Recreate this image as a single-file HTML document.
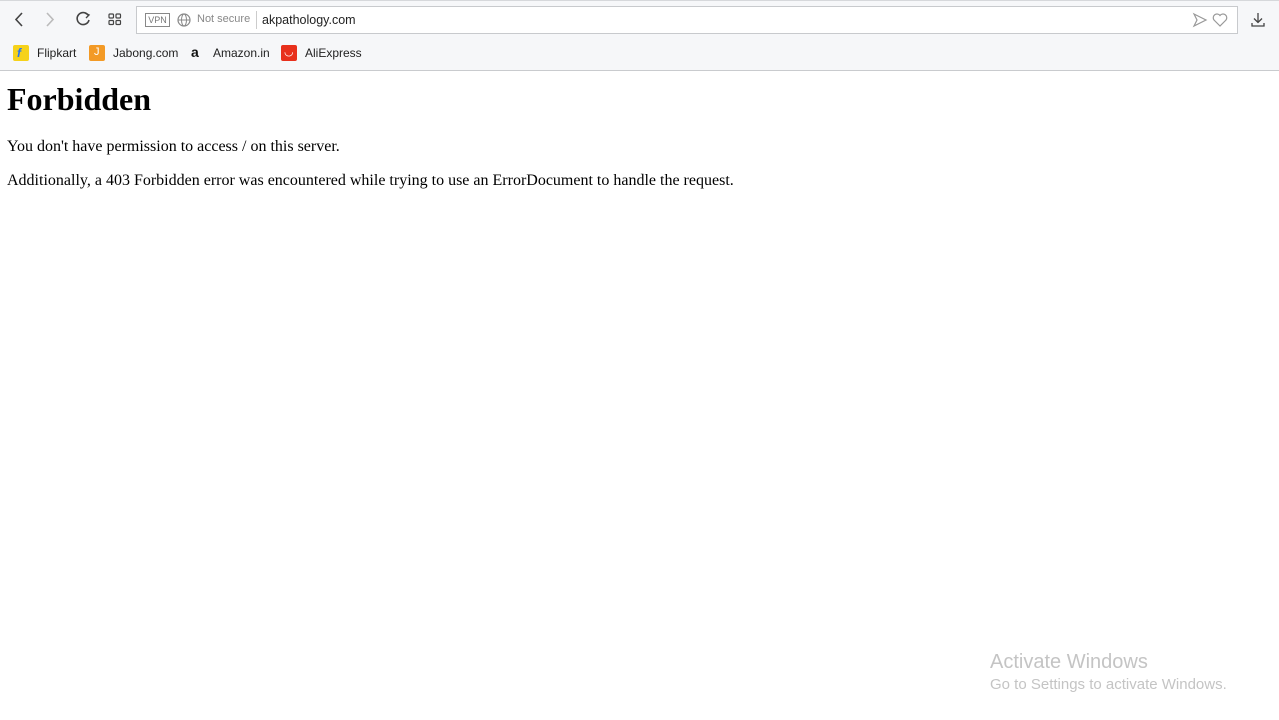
<!DOCTYPE html>
<html><head><style>
body{margin:0;width:1279px;height:720px;background:#fff;position:relative;overflow:hidden;font-family:"Liberation Serif",serif}
.bar{position:absolute;left:0;top:0;width:1279px;height:71px;background:#f6f7f9;border-bottom:1px solid #c9cbce;border-top:1px solid #d6d8db;box-sizing:border-box}
.ui{font-family:"Liberation Sans","DejaVu Sans",sans-serif;position:absolute;white-space:nowrap}
.addr{position:absolute;left:136px;top:6px;width:1102px;height:28px;border:1px solid #c8cacd;background:#fff;box-sizing:border-box}
.bm{font-size:12px;color:#222;top:46px}
.ic{position:absolute;width:16px;height:16px;top:45px;border-radius:2px}
h1{position:absolute;left:7px;top:81px;margin:0;font-size:32px;font-weight:bold}
p{position:absolute;left:7px;margin:0;font-size:16px}
</style></head><body>
<div class="bar"></div>
<svg class="ui" style="left:0;top:0" width="140" height="40">
<path d="M22 13 L16 19.5 L22 26" stroke="#444" stroke-width="1.6" fill="none"/>
<path d="M47 13 L53 19.5 L47 26" stroke="#bbb" stroke-width="1.6" fill="none"/>
<path d="M88 15 A6 6 0 1 0 89 20" stroke="#444" stroke-width="1.6" fill="none"/><path d="M85 13 L89 15 L86 18" stroke="#444" stroke-width="1.4" fill="none"/>
<rect x="109" y="14" width="4.5" height="4" rx="1" stroke="#444" fill="none" stroke-width="1.2"/><rect x="116" y="14" width="4.5" height="4" rx="1" stroke="#444" fill="none" stroke-width="1.2"/><rect x="109" y="20.5" width="4.5" height="4" rx="1" stroke="#444" fill="none" stroke-width="1.2"/><rect x="116" y="20.5" width="4.5" height="4" rx="1" stroke="#444" fill="none" stroke-width="1.2"/>
</svg>
<div class="addr"></div>
<div class="ui" style="left:145px;top:13px;width:23px;height:12px;border:1px solid #888;font-size:9px;color:#777;text-align:center;line-height:12px">VPN</div>
<svg class="ui" style="left:176px;top:12px" width="16" height="16"><circle cx="8" cy="8" r="6" stroke="#888" fill="none" stroke-width="1.2"/><ellipse cx="8" cy="8" rx="2.5" ry="6" stroke="#888" fill="none"/><path d="M2 8H14" stroke="#888"/></svg>
<div class="ui" style="left:197px;top:13px;font-size:11px;color:#888">Not secure</div>
<div class="ui" style="left:256px;top:11px;width:1px;height:18px;background:#ccc"></div>
<div class="ui" style="left:262px;top:13px;font-size:12.5px;color:#222">akpathology.com</div>
<svg class="ui" style="left:1190px;top:10px" width="40" height="20"><path d="M4 4 L16 10 L4 16 L7 10 Z" stroke="#999" fill="none" stroke-width="1.2"/><path d="M30 16 L24 10 A3.3 3.3 0 0 1 30 5.5 A3.3 3.3 0 0 1 36 10 Z" stroke="#999" fill="none" stroke-width="1.2"/></svg>
<svg class="ui" style="left:1249px;top:11px" width="18" height="18"><path d="M9 2V11 M5 7.5 L9 11.5 L13 7.5 M3 12V15H15V12" stroke="#444" fill="none" stroke-width="1.3"/></svg>
<div class="ic" style="left:13px;background:#f6d21a"><span class="ui" style="left:4px;top:1px;color:#2874f0;font-size:12px;font-weight:bold;font-style:italic">f</span></div>
<div class="ui bm" style="left:37px">Flipkart</div>
<div class="ic" style="left:89px;background:#f39a26"><span class="ui" style="left:5px;top:1px;color:#fff;font-size:11px">J</span></div>
<div class="ui bm" style="left:113px">Jabong.com</div>
<div class="ui" style="left:191px;top:44px;font-size:14px;font-weight:bold;color:#111">a</div>
<div class="ui bm" style="left:213px">Amazon.in</div>
<div class="ic" style="left:281px;background:#e8301c"><span class="ui" style="left:3px;top:0;color:#fff;font-size:11px">◡</span></div>
<div class="ui bm" style="left:305px">AliExpress</div>
<h1>Forbidden</h1>
<p style="top:138px">You don't have permission to access / on this server.</p>
<p style="top:172px">Additionally, a 403 Forbidden error was encountered while trying to use an ErrorDocument to handle the request.</p>
<div class="ui" style="left:990px;top:651px;font-size:20px;color:#c4c4c4">Activate Windows</div>
<div class="ui" style="left:990px;top:676px;font-size:15px;color:#c4c4c4">Go to Settings to activate Windows.</div>
</body></html>
